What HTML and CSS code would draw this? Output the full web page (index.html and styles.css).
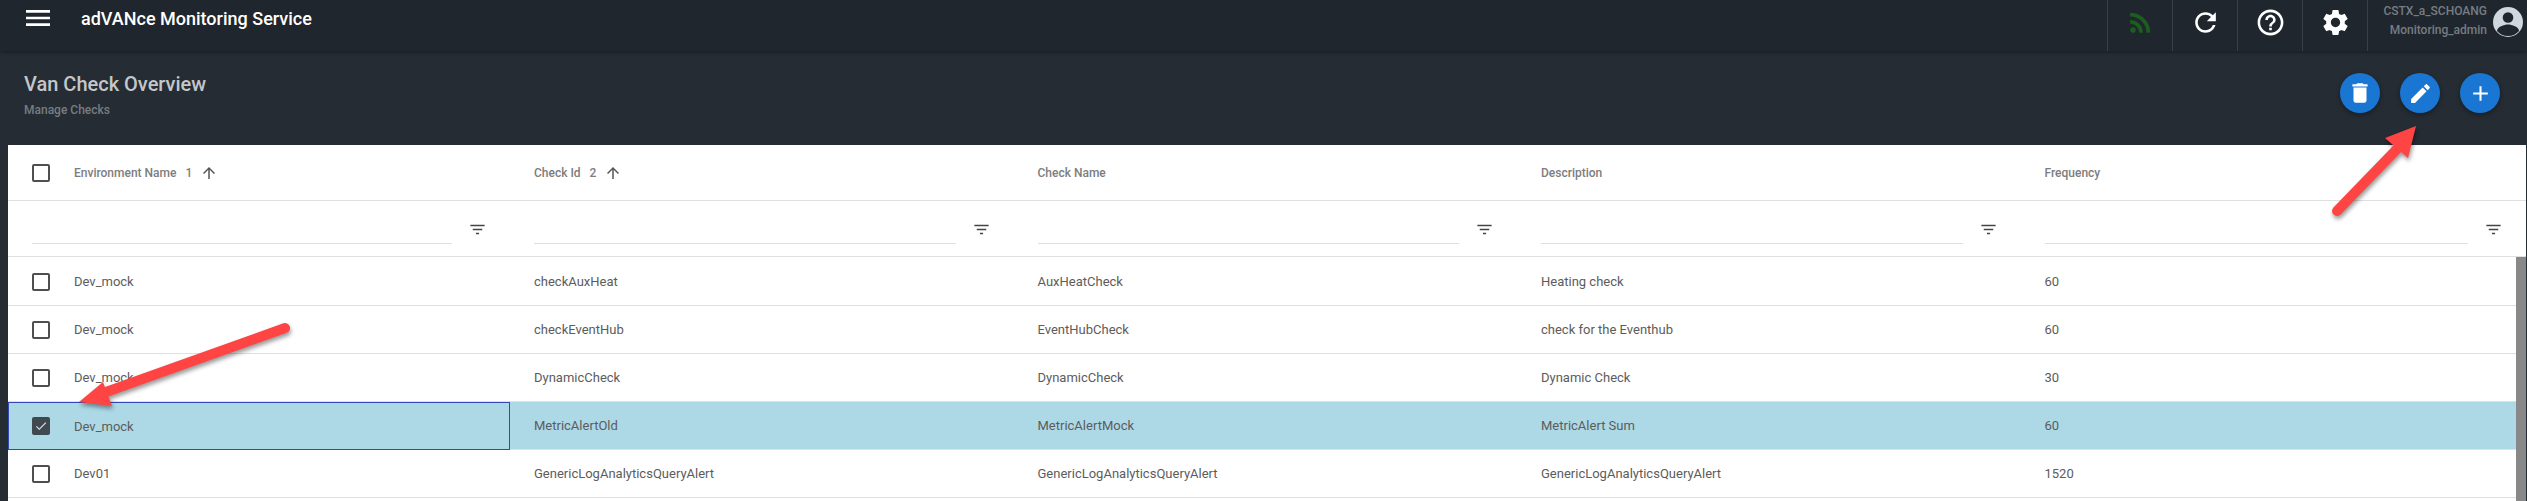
FILE: index.html
```html
<!DOCTYPE html>
<html>
<head>
    <title>Van Check Overview</title>
    <link rel="stylesheet" href="styles.css">
</head>
<body>
    <div class="topbar">
        <div class="brand">
            <svg class="menu-icon" viewBox="0 0 24 24"><path d="M3 18h18v-2H3v2zm0-5h18v-2H3v2zm0-7v2h18V6H3z"/></svg>
            <span class="app-name">adVANce Monitoring Service</span>
        </div>
        <div class="actions">
            <div class="action">
                <svg class="action-icon rss" viewBox="0 0 24 24"><circle cx="6.18" cy="17.82" r="2.18"/><path d="M4 4.44v2.83c7.03 0 12.73 5.7 12.73 12.73h2.83c0-8.59-6.97-15.56-15.56-15.56zm0 5.66v2.83c3.9 0 7.07 3.17 7.07 7.07h2.83c0-5.47-4.43-9.9-9.9-9.9z"/></svg>
            </div>
            <div class="action">
                <svg class="action-icon" viewBox="0 0 24 24"><path d="M17.65 6.35C16.2 4.9 14.21 4 12 4c-4.42 0-7.99 3.58-7.99 8s3.57 8 7.99 8c3.73 0 6.84-2.55 7.73-6h-2.08c-.82 2.33-3.04 4-5.65 4-3.31 0-6-2.69-6-6s2.69-6 6-6c1.66 0 3.14.69 4.22 1.78L13 11h7V4l-2.35 2.35z"/></svg>
            </div>
            <div class="action">
                <svg class="action-icon" viewBox="0 0 24 24"><path d="M11 18h2v-2h-2v2zm1-16C6.48 2 2 6.48 2 12s4.48 10 10 10 10-4.48 10-10S17.52 2 12 2zm0 18c-4.41 0-8-3.59-8-8s3.59-8 8-8 8 3.59 8 8-3.59 8-8 8zm0-14c-2.21 0-4 1.79-4 4h2c0-1.1.9-2 2-2s2 .9 2 2c0 2-3 1.75-3 5h2c0-2.25 3-2.5 3-5 0-2.21-1.79-4-4-4z"/></svg>
            </div>
            <div class="action">
                <svg class="action-icon" viewBox="0 0 24 24"><path d="M19.14 12.94c.04-.3.06-.61.06-.94 0-.32-.02-.64-.07-.94l2.03-1.58c.18-.14.23-.41.12-.61l-1.92-3.32c-.12-.22-.37-.29-.59-.22l-2.39.96c-.5-.38-1.03-.7-1.62-.94l-.36-2.54c-.04-.24-.24-.41-.48-.41h-3.84c-.24 0-.43.17-.47.41l-.36 2.54c-.59.24-1.13.57-1.62.94l-2.39-.96c-.22-.08-.47 0-.59.22L2.74 8.87c-.12.21-.08.47.12.61l2.03 1.58c-.05.3-.09.63-.09.94s.02.64.07.94l-2.03 1.58c-.18.14-.23.41-.12.61l1.92 3.32c.12.22.37.29.59.22l2.39-.96c.5.38 1.03.7 1.62.94l.36 2.54c.05.24.24.41.48.41h3.84c.24 0 .44-.17.47-.41l.36-2.54c.59-.24 1.13-.56 1.62-.94l2.39.96c.22.08.47 0 .59-.22l1.92-3.32c.12-.22.07-.47-.12-.61l-2.01-1.58zM12 15.6c-1.98 0-3.6-1.62-3.6-3.6s1.62-3.6 3.6-3.6 3.6 1.62 3.6 3.6-1.62 3.6-3.6 3.6z"/></svg>
            </div>
            <div class="user">
                <div class="user-text">
                    <div>CSTX_a_SCHOANG</div>
                    <div>Monitoring_admin</div>
                </div>
                <svg class="avatar" viewBox="0 0 30 30">
                    <circle cx="15" cy="15" r="15" fill="#cfd8dc"/>
                    <circle cx="15" cy="10.5" r="5.3" fill="#1f262d"/>
                    <path d="M4 24c0-4.300 7.300-6.500 11-6.500S26 19.700 26 24c-2.500 3-6.500 5-11 5S6.500 27 4 24z" fill="#1f262d"/>
                </svg>
            </div>
        </div>
    </div>

    <div class="subheader">
        <div class="page-title">
            <h1>Van Check Overview</h1>
            <p>Manage Checks</p>
        </div>
        <div class="fabs">
            <button class="fab"><svg class="fab-trash" viewBox="0 0 24 24"><path d="M6 19c0 1.100.9 2 2 2h8c1.100 0 2-.9 2-2V7H6v12zM19 4h-3.500l-1-1h-5l-1 1H5v2h14V4z"/></svg></button>
            <button class="fab"><svg viewBox="0 0 24 24"><path d="M3 17.250V21h3.750L17.810 9.940l-3.750-3.750L3 17.250zM20.710 7.040c.39-.39.39-1.020 0-1.410l-2.340-2.340c-.39-.39-1.020-.39-1.410 0l-1.830 1.830 3.750 3.750 1.830-1.830z"/></svg></button>
            <button class="fab"><svg viewBox="0 0 24 24"><path d="M19 13h-6v6h-2v-6H5v-2h6V5h2v6h6v2z"/></svg></button>
        </div>
    </div>

    <div class="grid">
        <div class="row head-row">
            <div class="cell"><span class="check"></span><span>Environment Name</span><span class="sort-no">1</span><svg class="sort-icon" viewBox="0 0 24 24"><path d="M4 12l1.410 1.410L11 7.830V20h2V7.830l5.580 5.590L20 12l-8-8-8 8z"/></svg></div>
            <div class="cell"><span>Check Id</span><span class="sort-no">2</span><svg class="sort-icon" viewBox="0 0 24 24"><path d="M4 12l1.410 1.410L11 7.830V20h2V7.830l5.580 5.590L20 12l-8-8-8 8z"/></svg></div>
            <div class="cell">Check Name</div>
            <div class="cell">Description</div>
            <div class="cell">Frequency</div>
        </div>
        <div class="row filter-row">
            <div class="cell"><input class="filter-input"><svg class="filter-icon" viewBox="0 0 24 24"><path d="M10 18h4v-2h-4v2zM3 6v2h18V6H3zm3 7h12v-2H6v2z"/></svg></div>
            <div class="cell"><input class="filter-input"><svg class="filter-icon" viewBox="0 0 24 24"><path d="M10 18h4v-2h-4v2zM3 6v2h18V6H3zm3 7h12v-2H6v2z"/></svg></div>
            <div class="cell"><input class="filter-input"><svg class="filter-icon" viewBox="0 0 24 24"><path d="M10 18h4v-2h-4v2zM3 6v2h18V6H3zm3 7h12v-2H6v2z"/></svg></div>
            <div class="cell"><input class="filter-input"><svg class="filter-icon" viewBox="0 0 24 24"><path d="M10 18h4v-2h-4v2zM3 6v2h18V6H3zm3 7h12v-2H6v2z"/></svg></div>
            <div class="cell"><input class="filter-input"><svg class="filter-icon" viewBox="0 0 24 24"><path d="M10 18h4v-2h-4v2zM3 6v2h18V6H3zm3 7h12v-2H6v2z"/></svg></div>
        </div>
        <div class="grid-body">
            <div class="rows">
                <div class="row data-row">
                    <div class="cell"><span class="check"></span>Dev_mock</div>
                    <div class="cell">checkAuxHeat</div>
                    <div class="cell">AuxHeatCheck</div>
                    <div class="cell">Heating check</div>
                    <div class="cell">60</div>
                </div>
                <div class="row data-row">
                    <div class="cell"><span class="check"></span>Dev_mock</div>
                    <div class="cell">checkEventHub</div>
                    <div class="cell">EventHubCheck</div>
                    <div class="cell">check for the Eventhub</div>
                    <div class="cell">60</div>
                </div>
                <div class="row data-row">
                    <div class="cell"><span class="check"></span>Dev_mock</div>
                    <div class="cell">DynamicCheck</div>
                    <div class="cell">DynamicCheck</div>
                    <div class="cell">Dynamic Check</div>
                    <div class="cell">30</div>
                </div>
                <div class="row data-row selected">
                    <div class="cell focused"><span class="check checked"><svg viewBox="0 0 24 24"><path d="M9 16.170L4.830 12l-1.420 1.410L9 19 21 7l-1.410-1.410z"/></svg></span>Dev_mock</div>
                    <div class="cell">MetricAlertOld</div>
                    <div class="cell">MetricAlertMock</div>
                    <div class="cell">MetricAlert Sum</div>
                    <div class="cell">60</div>
                </div>
                <div class="row data-row">
                    <div class="cell"><span class="check"></span>Dev01</div>
                    <div class="cell">GenericLogAnalyticsQueryAlert</div>
                    <div class="cell">GenericLogAnalyticsQueryAlert</div>
                    <div class="cell">GenericLogAnalyticsQueryAlert</div>
                    <div class="cell">1520</div>
                </div>
            </div>
            <div class="scrollbar"></div>
        </div>
    </div>

    <!-- red annotation arrows drawn over the screen -->
    <svg class="arrows" viewBox="0 0 2527 501">
        <line x1="2337" y1="211" x2="2397" y2="149"/>
        <polygon points="2416,126 2385,138 2408,158"/>
        <line x1="285" y1="328" x2="106" y2="392"/>
        <polygon points="79,402 103,382 112,406"/>
    </svg>
</body>
</html>
```

FILE: styles.css
```css
html, body {
    margin: 0;
    height: 501px;
    overflow: hidden;
}
body {
    position: relative;
    display: flex;
    flex-direction: column;
    font-family: Roboto, "Liberation Sans", sans-serif;
    background-color: #252c34;
}

/* top bar */
.topbar {
    display: flex;
    justify-content: space-between;
    height: 51px;
    background-color: #1f262d;
    box-shadow: 0 1px 4px rgba(0, 0, 0, 0.4);
}
.brand {
    display: flex;
    align-items: center;
    height: 36px;
    padding-left: 22px;
}
.menu-icon {
    width: 32px;
    height: 32px;
    fill: #fff;
}
.app-name {
    margin-left: 27px;
    color: #fff;
    font-size: 18px;
    font-weight: 500;
}
.actions {
    display: flex;
}
.action {
    display: flex;
    align-items: center;
    justify-content: center;
    width: 64px;
    padding-bottom: 6px;
    border-left: 1px solid #383f46;
}
.action-icon {
    width: 31px;
    height: 31px;
    fill: #fff;
}
.action-icon.rss {
    fill: #1b5e20;
}
.user {
    display: flex;
    width: 159px;
    padding-left: 0;
    border-left: 1px solid #383f46;
    justify-content: flex-end;
    align-items: flex-start;
}
.user-text {
    margin-top: 2px;
    color: #777c82;
    font-size: 12px;
    font-weight: 500;
    line-height: 19px;
    text-align: right;
}
.avatar {
    width: 30px;
    height: 30px;
    margin: 7px 4px 0 6px;
}

/* page title */
.subheader {
    display: flex;
    justify-content: space-between;
    height: 94px;
}
.page-title {
    padding: 21px 0 0 24px;
}
.page-title h1 {
    margin: 0;
    color: #c4c7ca;
    font-size: 20px;
    font-weight: 500;
    line-height: 24px;
}
.page-title p {
    margin: 6px 0 0;
    color: #777c82;
    font-size: 12px;
    font-weight: 500;
    line-height: 16px;
}
.fabs {
    display: flex;
    gap: 20px;
    padding: 22px 27px 0 0;
}
.fab {
    display: flex;
    align-items: center;
    justify-content: center;
    width: 40px;
    height: 40px;
    padding: 0;
    border: none;
    border-radius: 50%;
    background-color: #1976d2;
    box-shadow: 0 2px 5px rgba(0, 0, 0, 0.35);
}
.fab svg {
    width: 25px;
    height: 25px;
    fill: #fff;
}
.fab .fab-trash {
    width: 26px;
    height: 26px;
}

/* table */
.grid {
    flex: 1;
    display: flex;
    flex-direction: column;
    min-height: 0;
    margin: 0 1px 0 8px;
    background-color: #fff;
    font-size: 12px;
}
.row {
    display: grid;
    grid-template-columns: 502px repeat(3, 503.5px) 1fr;
    box-sizing: border-box;
    border-bottom: 1px solid #e0e0e0;
}
.cell {
    display: flex;
    align-items: center;
    box-sizing: border-box;
    padding-left: 24px;
    white-space: nowrap;
}
.head-row {
    height: 56px;
    color: #7d7d7d;
    font-weight: 500;
}
.filter-row {
    height: 56px;
}
.filter-row .cell {
    padding-right: 26px;
}
.filter-input {
    flex: 1;
    min-width: 0;
    height: 30px;
    margin: 0 18px 0 0;
    padding: 0;
    border: none;
    border-bottom: 1px solid #e0e0e0;
    outline: none;
}
.filter-icon {
    width: 19px;
    height: 19px;
    margin: 1px -3px 0 -2px;
    fill: #444;
}
.sort-no {
    margin-left: 9px;
    font-size: 12px;
}
.sort-icon {
    width: 18px;
    height: 18px;
    margin-left: 8px;
    fill: #555;
}
.check {
    flex: none;
    box-sizing: border-box;
    display: flex;
    width: 18px;
    height: 18px;
    margin-right: 24px;
    border: 2px solid #4f4f4f;
    border-radius: 2px;
}
.check.checked {
    background-color: #40494f;
    border-color: #40494f;
}
.check svg {
    width: 14px;
    height: 14px;
    fill: #cfe8f0;
}
.grid-body {
    flex: 1;
    display: flex;
    min-height: 0;
}
.rows {
    flex: 1;
    min-width: 0;
    padding-top: 1px;
}
.data-row {
    height: 48px;
    color: #5c5c5c;
    font-size: 13px;
}
.data-row.selected {
    background-color: #add8e6;
    border-bottom-color: #d5e6ec;
}
.focused {
    margin-bottom: -1px;
    border: 1px solid #3449b8;
    padding-left: 23px;
}
.scrollbar {
    flex: none;
    width: 10px;
    background-color: #888;
}

/* annotation arrows */
.arrows {
    position: absolute;
    left: 0;
    top: 0;
    width: 2527px;
    height: 501px;
    filter: drop-shadow(1px 3px 2px rgba(0, 0, 0, 0.4));
    pointer-events: none;
}
.arrows line {
    stroke: #ff4444;
    stroke-width: 10;
    stroke-linecap: round;
}
.arrows polygon {
    fill: #ff4444;
}
```
